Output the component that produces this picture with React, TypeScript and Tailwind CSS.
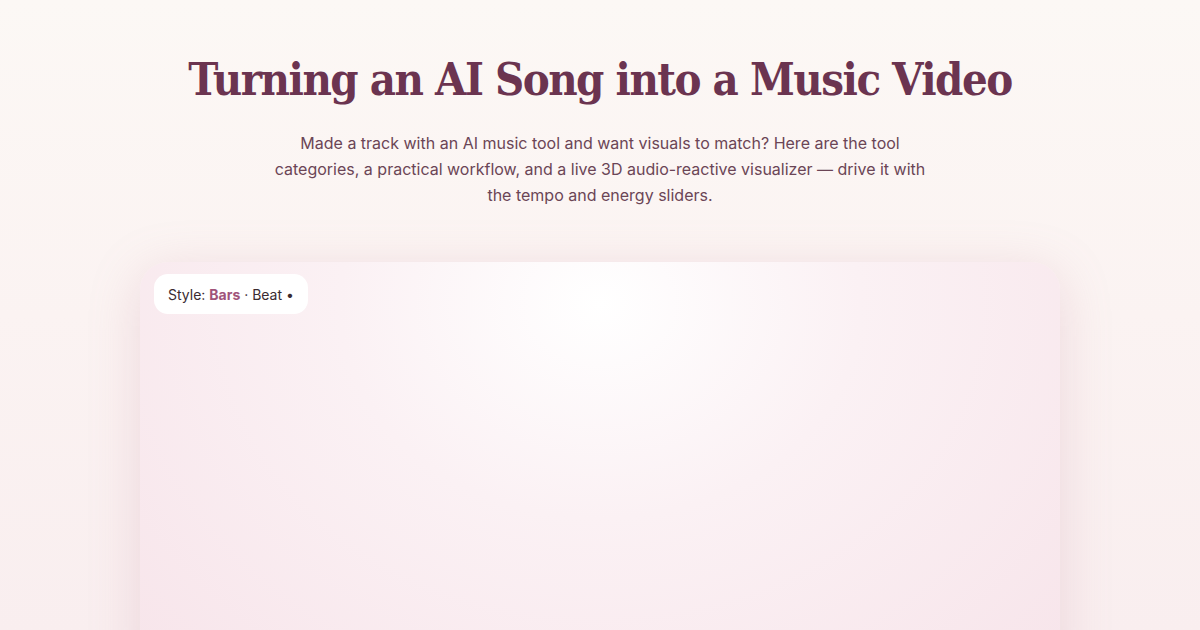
export default function App() {
  return (
    <div className="w-[1200px] h-[630px] overflow-hidden bg-[linear-gradient(180deg,#fcf8f5_0%,#fbf3f2_50%,#f9eeef_100%)] flex flex-col items-center" style={{ fontFamily: "Inter, 'Noto Sans', sans-serif" }}>
      <h1 className="mt-[52px] text-[45px] leading-[56px] font-bold text-[#6b3450] tracking-[-1.5px] font-stretch-condensed" style={{ fontFamily: "'DejaVu Serif Condensed', 'DejaVu Serif', 'Liberation Serif', serif" }}>
        Turning an AI Song into a Music Video
      </h1>
      <p className="mt-[22px] w-[660px] text-center text-[16px] leading-[26px] text-[#6b4556]">
        Made a track with an AI music tool and want visuals to match? Here are the tool categories, a practical workflow, and a live 3D audio-reactive visualizer — drive it with the tempo and energy sliders.
      </p>
      <div className="mt-[54px] w-[920px] h-[420px] shrink-0 rounded-[28px] shadow-[0_10px_50px_rgba(200,140,160,0.25)] bg-[radial-gradient(ellipse_at_50%_10%,#ffffff_0%,#fbf1f4_40%,#f7e4ea_100%)] p-[12px] pl-[14px]">
        <div className="inline-flex items-center h-[40px] px-[14px] rounded-[14px] bg-white text-[14px] text-[#3a2b31]">
          <span>Style:&nbsp;</span>
          <span className="font-bold text-[#a0537a]">Bars</span>
          <span>&nbsp;·&nbsp;Beat&nbsp;•</span>
        </div>
      </div>
    </div>
  );
}
